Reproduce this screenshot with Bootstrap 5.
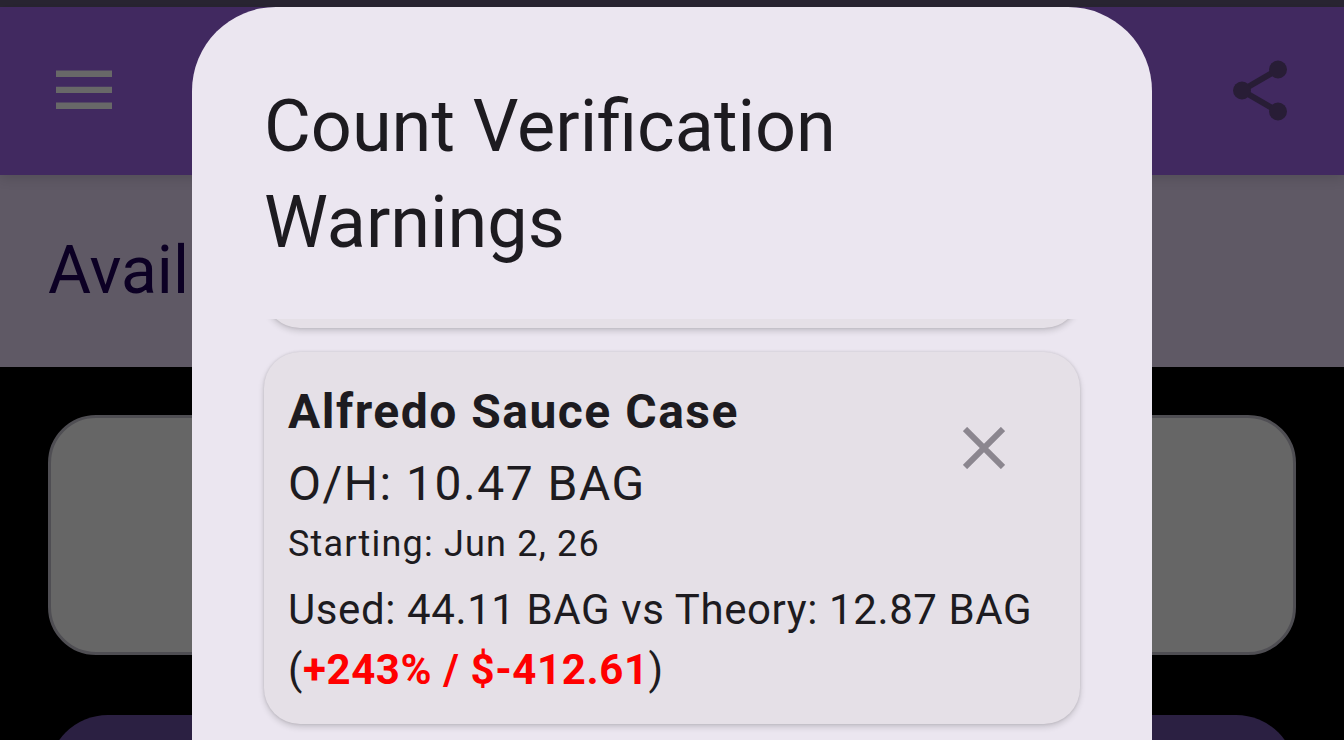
<!DOCTYPE html>
<html lang="en">
<head>
<meta charset="utf-8">
<meta name="viewport" content="width=device-width, initial-scale=1">
<title>Count Verification Warnings</title>
<link href="https://cdn.jsdelivr.net/npm/bootstrap@5.3.0/dist/css/bootstrap.min.css" rel="stylesheet">
<style>
  body { font-family: Roboto, "Liberation Sans", sans-serif; background: #000; color: #1d1b20; }
  .page-shell { height: 100vh; }
  .status-strip { height: 7px; background: #292532; }
  .app-header { height: 168px; padding: 0 48px 2px; background: #412960; box-shadow: 0 3px 12px rgba(0,0,0,.14); z-index: 1; }
  .icon-button { padding: 8px; border: 0; background: none; line-height: 1; }
  .section-band { padding: 54px 48px; background: #5f5965; }
  .section-title { font-size: 66px; line-height: 84px; font-weight: 400; color: #0c0024; }
  .page-body { padding: 48px; gap: 60px; }
  .field-box { height: 240px; border: 3px solid #4f4e53; border-radius: 48px; background: #666; }
  .action-button { height: 120px; border: 0; border-radius: 60px; background: #2b2042; }
  .dialog-layer { padding: 7px 192px 0; z-index: 2; }
  .dialog-panel { min-height: 100%; padding: 72px 72px 0; border-radius: 84px 84px 0 0; background: #ebe6f0; }
  .dialog-title { margin: 0 0 48px; font-size: 72px; line-height: 96px; font-weight: 400; }
  .warning-list { gap: 24px; overflow-x: visible; overflow-y: clip; }
  .warning-card { padding: 24px; border-radius: 36px; background: #e5e0e7; box-shadow: 0 3px 6px rgba(0,0,0,.16), 0 0 3px rgba(0,0,0,.12); }
  .scrolled-card { height: 72px; margin-top: -63px; }
  .body-large { font-size: 48px; line-height: 72px; letter-spacing: .03125em; }
  .body-medium { font-size: 42px; line-height: 60px; letter-spacing: .0143em; margin-top: 12px; }
  .body-small { font-size: 36px; line-height: 48px; letter-spacing: .033em; }
  .variance { color: #f00; }
  .dismiss-button { width: 144px; height: 144px; }
</style>
</head>
<body>
<div class="page-shell position-relative overflow-hidden d-flex flex-column">
  <div class="status-strip flex-shrink-0"></div>
  <header class="app-header flex-shrink-0 d-flex align-items-center justify-content-between position-relative">
    <button type="button" class="icon-button" aria-label="Menu">
      <svg class="d-block" width="56" height="40" viewBox="0 0 56 40" fill="#686868"><path d="M0 0.500h56v6.500H0zM0 16.700h56v6.300H0zM0 32.500h56v6.500H0z"/></svg>
    </button>
    <button type="button" class="icon-button" aria-label="Share">
      <svg class="d-block" width="56" height="61" viewBox="0 0 56 61" fill="#281d36" stroke="#281d36"><path d="M46 9.500L10 30.500l36 21" fill="none" stroke-width="6"/><g stroke="none"><circle cx="46" cy="9.500" r="9"/><circle cx="10" cy="30.500" r="9"/><circle cx="46" cy="51.500" r="9"/></g></svg>
    </button>
  </header>
  <section class="section-band flex-shrink-0"><h1 class="section-title m-0">Avail</h1></section>
  <main class="page-body d-flex flex-column flex-shrink-0">
    <div class="field-box"></div>
    <button type="button" class="action-button" aria-label="Continue"></button>
  </main>

  <div class="dialog-layer position-absolute top-0 start-0 w-100 h-100">
    <div class="dialog-panel" role="dialog" aria-labelledby="dialogTitle">
      <h2 class="dialog-title" id="dialogTitle">Count Verification Warnings</h2>
      <div class="warning-list d-flex flex-column pb-5">
        <div class="warning-card scrolled-card"></div>
        <article class="warning-card">
          <div class="d-flex justify-content-between">
            <div>
              <div class="body-large fw-bold">Alfredo Sauce Case</div>
              <div class="body-large">O/H: 10.47 BAG</div>
            </div>
            <button type="button" class="icon-button dismiss-button d-flex align-items-center justify-content-center" aria-label="Dismiss warning">
              <svg width="42" height="42" viewBox="0 0 42 42" fill="none" stroke="#8b868f" stroke-width="6"><path d="M2 2l38 38M40 2L2 40"/></svg>
            </button>
          </div>
          <div class="body-small">Starting: Jun 2, 26</div>
          <div class="body-medium">
            <div>Used: 44.11 BAG vs Theory: 12.87 BAG</div>
            <div class="d-flex"><span>(</span><span class="variance fw-bold">+243% / $-412.61</span><span>)</span></div>
          </div>
        </article>
      </div>
    </div>
  </div>
</div>
<script src="https://cdn.jsdelivr.net/npm/bootstrap@5.3.0/dist/js/bootstrap.bundle.min.js"></script>
</body>
</html>
